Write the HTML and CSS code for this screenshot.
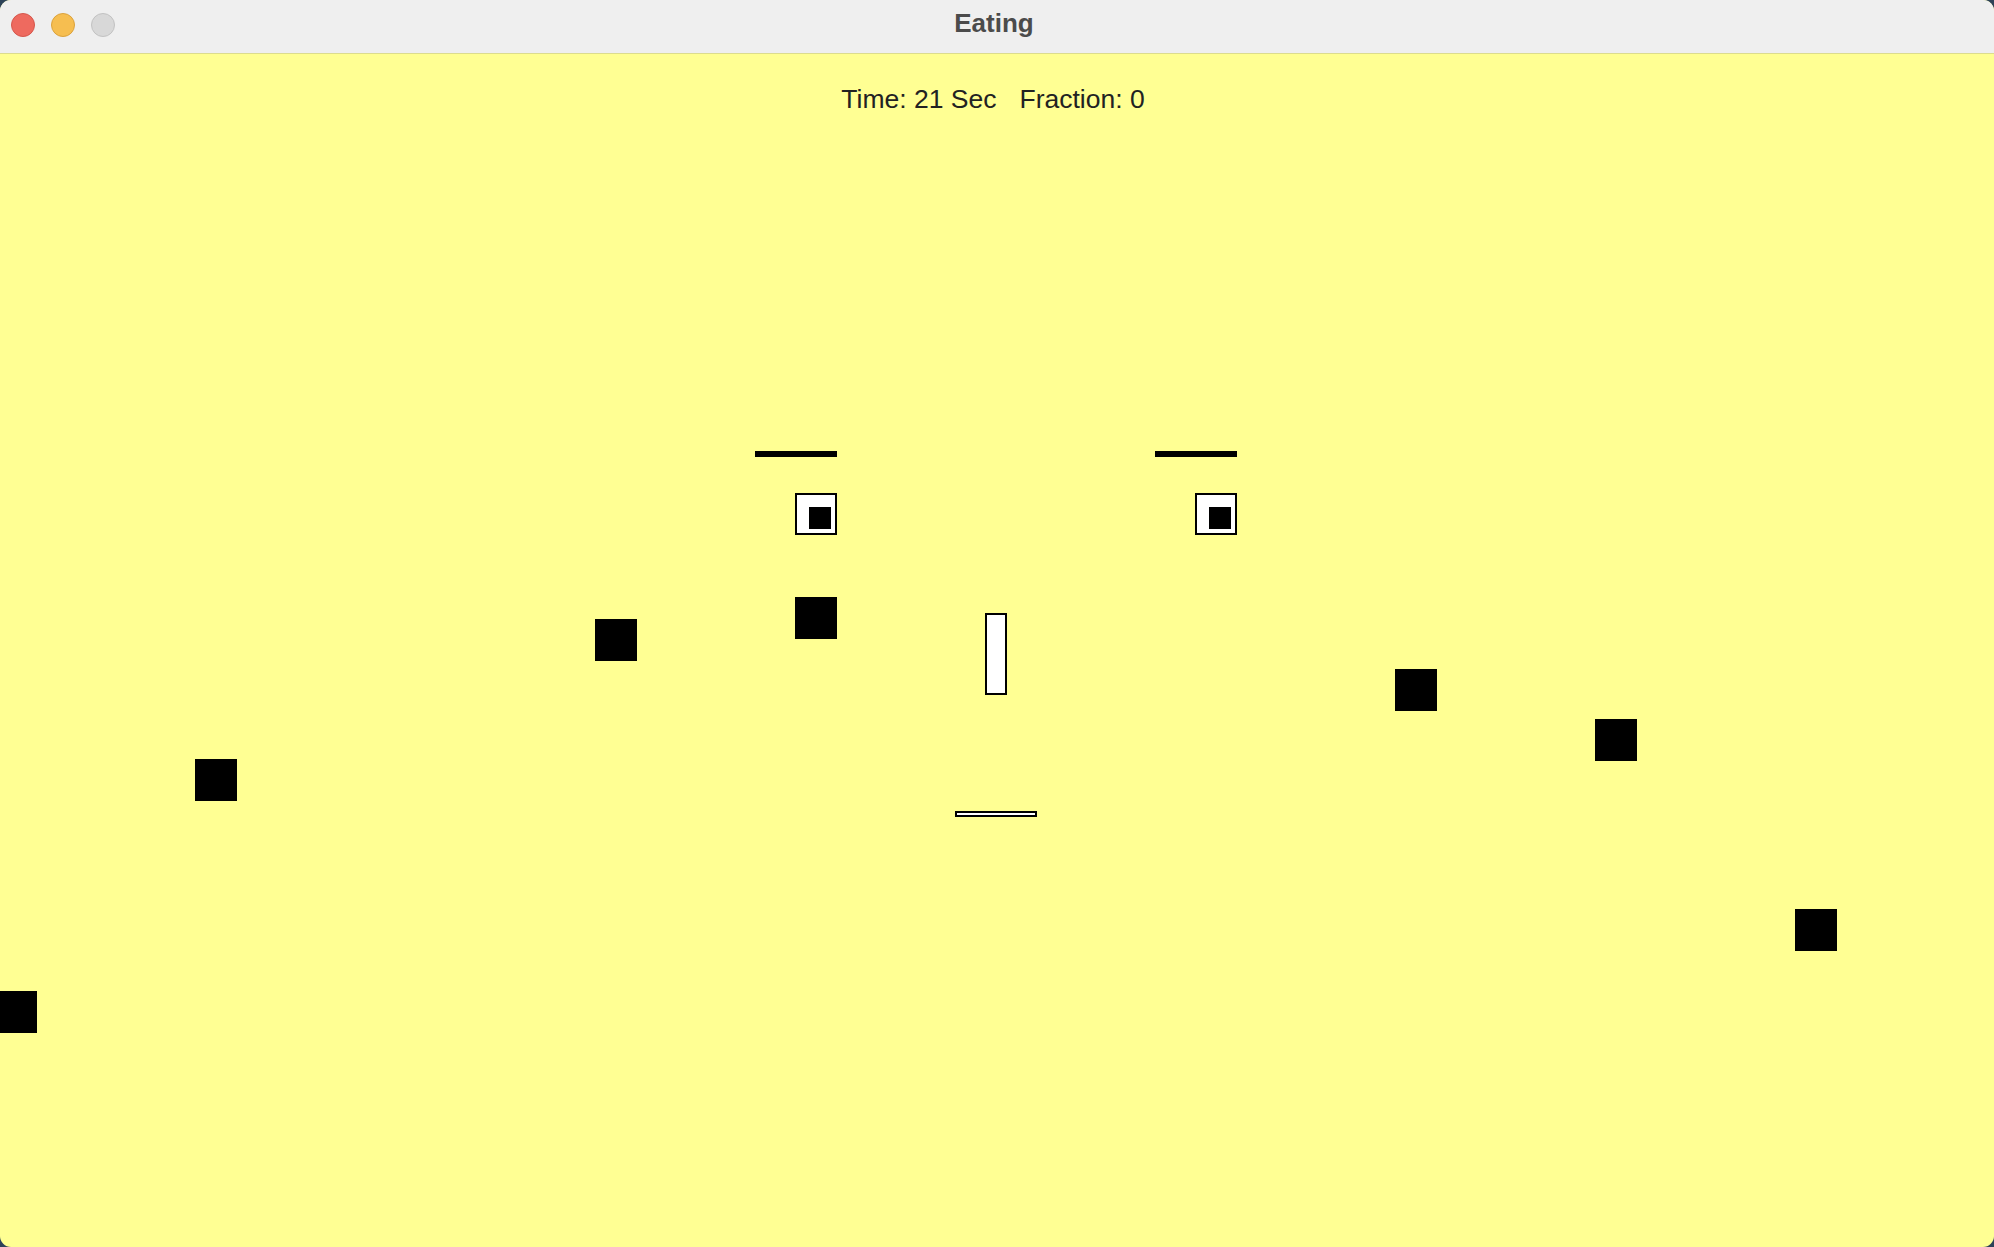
FILE: index.html
```html
<!DOCTYPE html>
<html lang="en">
<head>
<meta charset="utf-8">
<title>Eating</title>
<link rel="stylesheet" href="styles.css">
</head>
<body>
<div class="window">
  <header class="titlebar">
    <div class="lights">
      <span class="light red"></span>
      <span class="light yellow"></span>
      <span class="light grey"></span>
    </div>
    <div class="title">Eating</div>
  </header>
  <main class="canvas">
    <div class="status">
      <span>Time: 21 Sec</span>
      <span>Fraction: 0</span>
    </div>

    <div class="brow brow-left"></div>
    <div class="brow brow-right"></div>
    <div class="eye eye-left"><div class="pupil"></div></div>
    <div class="eye eye-right"><div class="pupil"></div></div>
    <div class="nose"></div>
    <div class="mouth"></div>

    <div class="food" style="left:595px;top:565px"></div>
    <div class="food" style="left:795px;top:543px"></div>
    <div class="food" style="left:1395px;top:615px"></div>
    <div class="food" style="left:1595px;top:665px"></div>
    <div class="food" style="left:195px;top:705px"></div>
    <div class="food" style="left:-5px;top:937px"></div>
    <div class="food" style="left:1795px;top:855px"></div>
  </main>
</div>
</body>
</html>
```
FILE: styles.css
```css
* { box-sizing: border-box; }
html, body {
  margin: 0;
  padding: 0;
  width: 1994px;
  height: 1247px;
  background: #2d4258;
  overflow: hidden;
}
.window {
  width: 1994px;
  height: 1247px;
  border-radius: 11px;
  overflow: hidden;
  display: flex;
  flex-direction: column;
  background: #ffff93;
}
.titlebar {
  position: relative;
  height: 54px;
  flex: 0 0 54px;
  background: #efefef;
  border-bottom: 1px solid #dcdc8e;
  display: flex;
  align-items: flex-start;
  justify-content: center;
}
.lights {
  position: absolute;
  left: 11px;
  top: 13px;
  display: flex;
  gap: 16px;
}
.light {
  width: 24px;
  height: 24px;
  border-radius: 50%;
  display: block;
}
.light.red { background: #ee6a5f; border: 1px solid #d5574c; }
.light.yellow { background: #f6be50; border: 1px solid #dba23c; }
.light.grey { background: #d8d8d8; border: 1px solid #c2c2c2; }
.title {
  font-family: "Liberation Sans", Arial, sans-serif;
  font-weight: bold;
  font-size: 26px;
  line-height: 47px;
  color: #4b4b4b;
  margin-left: -6px;
}
.canvas {
  position: relative;
  flex: 1;
}
.status {
  display: flex;
  justify-content: center;
  gap: 23px;
  padding-top: 30px;
  padding-right: 8px;
  font-family: "Liberation Sans", Arial, sans-serif;
  font-size: 26.5px;
  line-height: 30px;
  color: #222;
  white-space: pre;
}
.brow {
  position: absolute;
  top: 397px;
  width: 82px;
  height: 6px;
  background: #000;
}
.brow-left { left: 755px; }
.brow-right { left: 1155px; }
.eye {
  position: absolute;
  top: 439px;
  width: 42px;
  height: 42px;
  background: #fff;
  border: 2px solid #000;
}
.eye-left { left: 795px; }
.eye-right { left: 1195px; }
.pupil {
  position: absolute;
  left: 12px;
  top: 12px;
  width: 22px;
  height: 22px;
  background: #000;
}
.nose {
  position: absolute;
  left: 985px;
  top: 559px;
  width: 22px;
  height: 82px;
  background: #fff;
  border: 2px solid #000;
}
.mouth {
  position: absolute;
  left: 955px;
  top: 757px;
  width: 82px;
  height: 6px;
  background: #fff;
  border: 2px solid #000;
}
.food {
  position: absolute;
  width: 42px;
  height: 42px;
  background: #000;
}
```
